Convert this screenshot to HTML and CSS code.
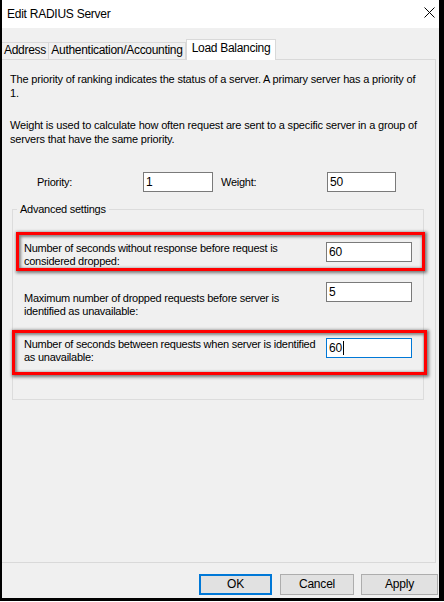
FILE: index.html
```html
<!DOCTYPE html>
<html>
<head>
<meta charset="utf-8">
<link rel="stylesheet" href="styles.css">
</head>
<body>
<div class="window">
  <div class="titlebar">
    <span class="title">Edit RADIUS Server</span>
    <svg class="close" width="11" height="11" viewBox="0 0 11 11"><path d="M0.5 0.5 L10.5 10.5 M10.5 0.5 L0.5 10.5" stroke="#000" stroke-width="1" fill="none"/></svg>
  </div>
  <div class="client">
    <div class="tabs">
      <div class="tab tab-address">Address</div>
      <div class="tab tab-auth">Authentication/Accounting</div>
      <div class="tab tab-load active">Load Balancing</div>
    </div>
    <div class="panel">
      <p class="desc">The priority of ranking indicates the status of a server. A primary server has a priority of<br>1.</p>
      <p class="desc desc-2">Weight is used to calculate how often request are sent to a specific server in a group of<br>servers that have the same priority.</p>
      <div class="prio-row">
        <span class="plabel">Priority:</span>
        <div class="field field-prio">1</div>
        <span class="plabel plabel-w">Weight:</span>
        <div class="field field-weight">50</div>
      </div>
      <fieldset class="group">
        <legend>Advanced settings</legend>
        <div class="row row-1 hl hl-a">
          <div class="label">Number of seconds without response before request is<br>considered dropped:</div>
          <div class="field field-adv">60</div>
        </div>
        <div class="row row-2">
          <div class="label label-low">Maximum number of dropped requests before server is<br>identified as unavailable:</div>
          <div class="field field-adv">5</div>
        </div>
        <div class="row row-3 hl hl-b">
          <div class="label">Number of seconds between requests when server is identified<br>as unavailable:</div>
          <div class="field field-adv focused">60<span class="caret"></span></div>
        </div>
      </fieldset>
    </div>
    <div class="buttons">
      <div class="btn btn-ok">OK</div>
      <div class="btn btn-cancel">Cancel</div>
      <div class="btn btn-apply">Apply</div>
    </div>
  </div>
</div>
</body>
</html>
```
FILE: styles.css
```css
html, body {
  margin: 0;
  padding: 0;
}
body {
  width: 444px;
  height: 602px;
  background: #ffffff;
  font-family: "Liberation Sans", Arial, sans-serif;
  font-size: 11px;
  color: #000;
  overflow: hidden;
}
.window {
  height: 601px;
  box-sizing: border-box;
  border-left: 2px solid #000;
  border-right: 5px solid #000;
  border-bottom: 3px solid #000;
  display: flex;
  flex-direction: column;
}
.titlebar {
  height: 28px;
  flex: none;
  background: #fff;
  display: flex;
  align-items: center;
  padding-left: 5px;
}
.title {
  font-size: 12px;
  letter-spacing: -0.25px;
  line-height: 14px;
  margin-top: -1px;
}
.close {
  margin-left: auto;
  margin-right: 4px;
  margin-top: -4px;
}
.client {
  flex: 1;
  background: #f0f0f0;
  display: flex;
  flex-direction: column;
}
.tabs {
  margin-top: 11px;
  height: 20px;
  display: flex;
  align-items: flex-end;
  position: relative;
  z-index: 1;
}
.tab {
  box-sizing: border-box;
  height: 17px;
  border-top: 1px solid #d9d9d9;
  border-right: 1px solid #d9d9d9;
  background: #f0f0f0;
  text-align: center;
  font-size: 12px;
  line-height: 15px;
  letter-spacing: -0.3px;
}
.tab-address { width: 47px; }
.tab-auth { width: 137px; }
.tab.active {
  width: 90px;
  height: 21px;
  margin-bottom: -1px;
  background: #fff;
  border-left: 1px solid #d9d9d9;
  line-height: 17px;
}
.panel {
  height: 504px;
  box-sizing: border-box;
  margin-right: 3px;
  border: 1px solid #d9d9d9;
  border-left: none;
  padding: 12px 0 0 8px;
}
.desc {
  margin: 0;
  line-height: 14px;
  letter-spacing: -0.18px;
  white-space: nowrap;
}
.desc-2 {
  margin-top: 18px;
}
.prio-row {
  margin-top: 26px;
  display: flex;
  align-items: center;
  padding-left: 27px;
}
.plabel {
  width: 106px;
  letter-spacing: -0.25px;
  line-height: 14px;
}
.plabel-w {
  margin-left: 8px;
}
.field {
  box-sizing: border-box;
  height: 20px;
  background: #fff;
  border: 1px solid #7a7a7a;
  font-size: 12px;
  line-height: 18px;
  padding-left: 2px;
  letter-spacing: -0.2px;
}
.field-prio { width: 70px; }
.field-weight { width: 69px; }
.field-adv { width: 86px; flex: none; }
.field.focused {
  border-color: #0078d7;
  display: flex;
  align-items: center;
}
.caret {
  width: 1px;
  height: 14px;
  background: #000;
  margin-left: 1px;
}
.group {
  margin: 10px 0 0 2px;
  width: 412px;
  box-sizing: border-box;
  border: 1px solid #dcdcdc;
  padding: 26px 11px 0 11px;
  height: 198px;
}
.group legend {
  margin-left: -7px;
  padding: 0 3px;
  line-height: 14px;
  letter-spacing: -0.25px;
}
.row {
  display: flex;
  justify-content: space-between;
  align-items: flex-start;
  position: relative;
}
.label {
  line-height: 13px;
  letter-spacing: -0.25px;
  white-space: nowrap;
}
.row-2 { margin-top: 14px; }
.label-low { margin-top: 10px; }
.row-3 { margin-top: 20px; }
.hl::after {
  content: "";
  position: absolute;
  border: 3px solid #ff0000;
  box-shadow: 1px 1px 3px 1px rgba(0, 0, 0, 0.5), inset 1px 1px 3px 1px rgba(0, 0, 0, 0.45);
  pointer-events: none;
}
.hl-a::after {
  left: -8px;
  top: -10px;
  right: -13px;
  bottom: -3px;
}
.hl-b::after {
  left: -12px;
  top: -8px;
  right: -15px;
  bottom: -11px;
}
.buttons {
  margin-top: 11px;
  display: flex;
  justify-content: flex-end;
  padding-right: 1px;
}
.btn {
  box-sizing: border-box;
  height: 21px;
  background: #e1e1e1;
  border: 1px solid #adadad;
  text-align: center;
  font-size: 12px;
  line-height: 19px;
  letter-spacing: -0.2px;
}
.btn-ok {
  width: 73px;
  border: 2px solid #0078d7;
  line-height: 17px;
}
.btn-cancel {
  width: 74px;
  margin-left: 8px;
}
.btn-apply {
  width: 77px;
  margin-left: 7px;
}
```
